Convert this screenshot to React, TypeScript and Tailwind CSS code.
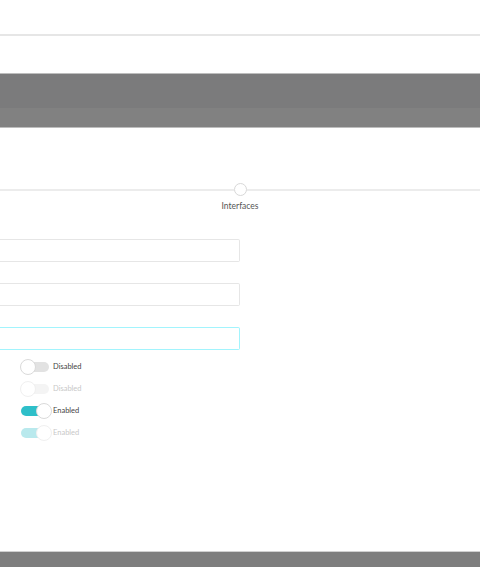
import React from "react";

function Toggle({ on, faded, label }: { on: boolean; faded?: boolean; label: string }) {
  const track = on
    ? faded
      ? "bg-[#b9e9ed]"
      : "bg-[#2ebfc9]"
    : faded
      ? "bg-[#f4f4f4]"
      : "bg-[#e2e2e2]";
  return (
    <div className="flex h-[16px] items-center">
      <div className="relative h-[16px] w-[32px]">
        <div className={`absolute left-[1px] top-[3px] h-[10px] w-[28px] rounded-full ${track}`} />
        <div
          className={`absolute top-0 h-[16px] w-[16px] rounded-full border bg-white ${
            faded ? "border-[#f0f0f0]" : "border-[#dadada]"
          } ${on ? "left-[16px]" : "left-0"}`}
        />
      </div>
      <span className={`ml-[1px] text-[7.5px] leading-[16px] ${faded ? "text-[#c8c8c8]" : "text-[#444]"}`}>
        {label}
      </span>
    </div>
  );
}

export default function App() {
  return (
    <div className="flex h-[567px] w-[480px] flex-col overflow-hidden bg-white font-['Lato','Liberation_Sans',sans-serif]">
      <div className="h-[36px] shrink-0 border-b-2 border-[#e6e6e6]" />
      <div className="h-[37px] shrink-0" />
      <div className="flex h-[55px] shrink-0 flex-col border-y border-[#bdbdbd] bg-[#7b7b7c]">
        <div className="h-[34px]" />
        <div className="flex-1 bg-[#818181]" />
      </div>

      <div className="mt-[55px] flex items-center">
        <div className="h-[2px] flex-1 bg-[#ececec]" />
        <div className="h-[13px] w-[13px] rounded-full border border-[#d8d8d8] bg-white" />
        <div className="h-[2px] flex-1 bg-[#ececec]" />
      </div>
      <div className="mt-[4px] text-center text-[8.5px] leading-[13px] text-[#555]">Interfaces</div>

      <div className="mt-[26px] flex w-[240px] flex-col gap-[21px]">
        <div className="h-[23px] rounded-r-[2px] border border-l-0 border-[#e6e6e6]" />
        <div className="h-[23px] rounded-r-[2px] border border-l-0 border-[#e6e6e6]" />
        <div className="h-[23px] rounded-r-[2px] border border-l-0 border-cyan-200 text-[#a9e3ea] [border-color:#a9e3ea]" />
      </div>

      <div className="ml-[20px] mt-[9px] flex flex-col gap-[6px]">
        <Toggle on={false} label="Disabled" />
        <Toggle on={false} faded label="Disabled" />
        <Toggle on label="Enabled" />
        <Toggle on faded label="Enabled" />
      </div>

      <div className="flex-1" />
      <div className="h-[16px] shrink-0 border-t border-[#d0d0d0] bg-[#7e7e7e]" />
    </div>
  );
}
